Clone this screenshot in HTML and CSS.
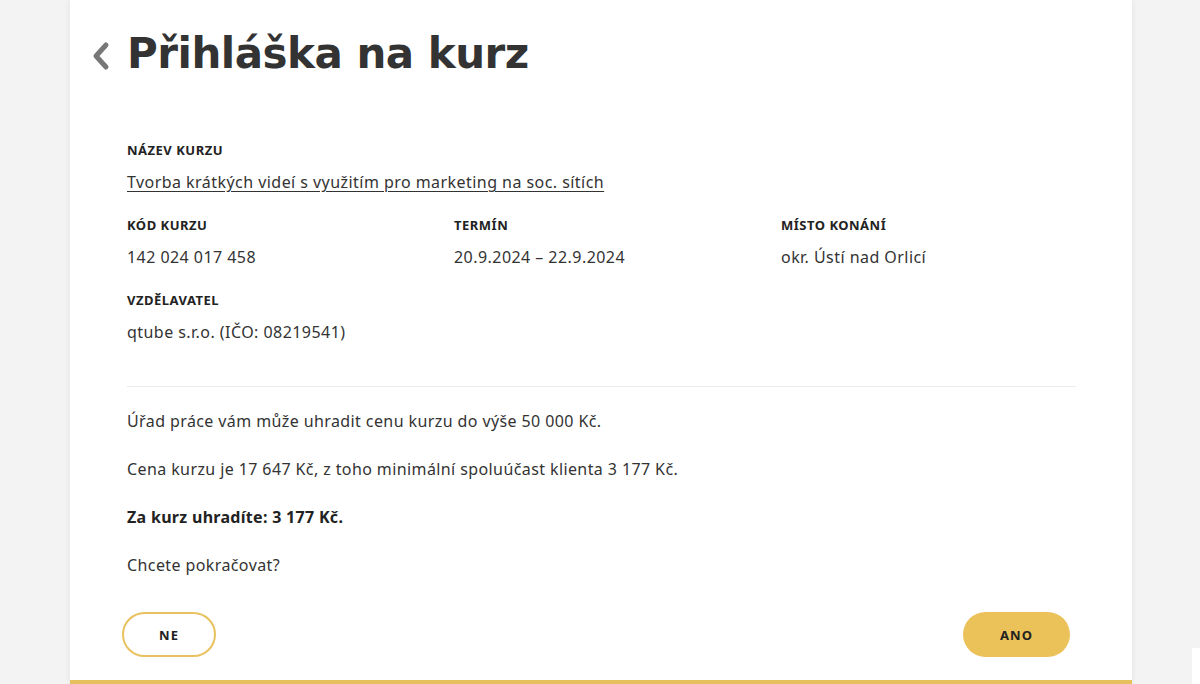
FILE: index.html
```html
<!DOCTYPE html>
<html lang="cs">
<head>
  <meta charset="UTF-8" />
  <meta name="viewport" content="width=device-width, initial-scale=1.0"/>
  <title>Přihláška na kurz</title>
  <link rel="stylesheet" href="styles.css">
</head>
<body>
  <div class="page">
    <div class="card">
      <h1 class="title">
        <a class="back" href="#">
          <svg width="20" height="30" viewBox="0 0 20 30"><path d="M15 4 L5 15 L15 26" fill="none" stroke="#777" stroke-width="5" stroke-linecap="round" stroke-linejoin="round"/></svg>
        </a>
        Přihláška na kurz
      </h1>

      <div class="info">
        <div class="field full">
          <div class="label">Název kurzu</div>
          <a class="value link" href="#">Tvorba krátkých videí s využitím pro marketing na soc. sítích</a>
        </div>
        <div class="field">
          <div class="label">Kód kurzu</div>
          <div class="value">142 024 017 458</div>
        </div>
        <div class="field">
          <div class="label">Termín</div>
          <div class="value">20.9.2024 – 22.9.2024</div>
        </div>
        <div class="field">
          <div class="label">Místo konání</div>
          <div class="value">okr. Ústí nad Orlicí</div>
        </div>
        <div class="field full">
          <div class="label">Vzdělavatel</div>
          <div class="value">qtube s.r.o. (IČO: 08219541)</div>
        </div>
      </div>

      <hr class="divider">

      <div class="summary">
        <p>Úřad práce vám může uhradit cenu kurzu do výše 50 000 Kč.</p>
        <p>Cena kurzu je 17 647 Kč, z toho minimální spoluúčast klienta 3 177 Kč.</p>
        <p><strong>Za kurz uhradíte: 3 177 Kč.</strong></p>
        <p>Chcete pokračovat?</p>
      </div>

      <div class="actions">
        <button class="btn btn-outline">NE</button>
        <button class="btn btn-fill">ANO</button>
      </div>
    </div>
  </div>
  <div class="corner"></div>
</body>
</html>
```

FILE: styles.css
```css
body {
  margin: 0;
  background: #f3f3f3;
  font-family: "Noto Sans", sans-serif;
  color: #333;
}
.page {
  width: 1062px;
  margin: 0 0 0 70px;
}
.card {
  background: white;
  box-shadow: 0 0 6px rgba(0,0,0,0.08);
  border-bottom: 4px solid #e6c05c;
  padding: 28px 56px 24px 57px;
  height: 628px;
}
.title {
  margin: 0 0 0 -36px;
  display: flex;
  align-items: center;
  gap: 16px;
  font-family: "DejaVu Sans", sans-serif;
  font-size: 42px;
  font-weight: bold;
  color: #333;
  line-height: 52px;
  letter-spacing: -0.5px;
}
.back {
  display: flex;
  padding-top: 4px;
}
.info {
  display: grid;
  grid-template-columns: repeat(3, 1fr);
  column-gap: 32px;
  row-gap: 23px;
  margin-top: 60px;
}
.field { line-height: 20px; }
.field.full { grid-column: 1 / -1; }
.label {
  font-size: 13px;
  font-weight: bold;
  text-transform: uppercase;
  letter-spacing: 0.5px;
  color: #222;
  line-height: 20px;
  margin-bottom: 12px;
}
.value {
  font-size: 16px;
  line-height: 20px;
  letter-spacing: 0.45px;
  color: #333;
}
.link {
  color: #333;
  text-decoration: underline;
  text-underline-offset: 3px;
}
.divider {
  border: none;
  border-top: 1px solid #ebebeb;
  margin: 44px 0 24px;
}
.summary p {
  font-size: 16px;
  line-height: 20px;
  letter-spacing: 0.4px;
  margin: 0 0 28px;
}
.summary strong { color: #222; letter-spacing: 0.3px; }
.actions {
  display: flex;
  justify-content: space-between;
  margin: 37px 6px 0 -5px;
}
.btn {
  height: 45px;
  border-radius: 23px;
  font-family: "Noto Sans", sans-serif;
  font-size: 13px;
  font-weight: bold;
  letter-spacing: 1px;
  color: #222;
  cursor: pointer;
}
.btn-outline {
  width: 94px;
  background: white;
  border: 2px solid #e8c25e;
}
.btn-fill {
  width: 107px;
  background: #ebc159;
  border: none;
}
.corner {
  position: fixed;
  right: 0;
  bottom: 0;
  width: 8px;
  height: 36px;
  background: white;
}
```
